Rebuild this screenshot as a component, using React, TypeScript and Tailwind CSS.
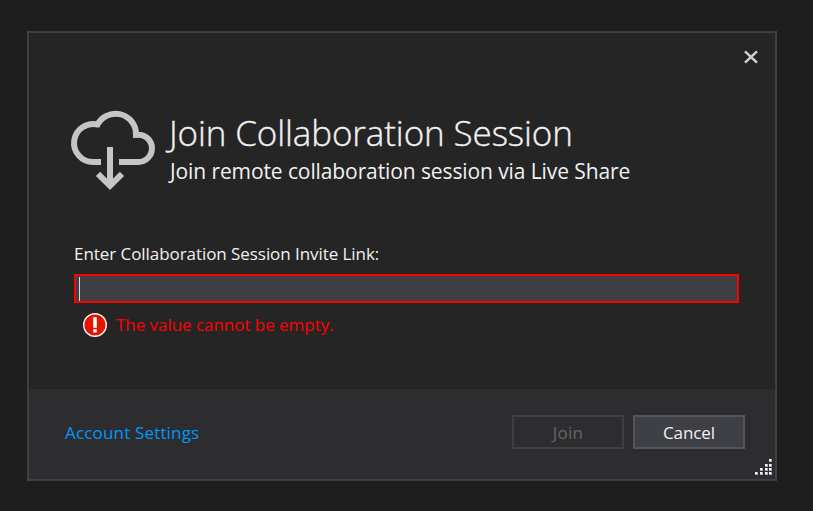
const GRIP: [number, number][] = [
  [14, 0],
  [10, 5], [14, 5],
  [5, 9], [10, 9], [14, 9],
  [0, 13], [5, 13], [10, 13], [14, 13],
];

function CloudDownload() {
  return (
    <svg className="block h-[84px] w-[90px] shrink-0" viewBox="8 8 90 84" fill="none" stroke="#c5c5c5" strokeWidth="6">
      <path d="M41 62H33A19 19 0 1 1 38.5 24.8" />
      <path d="M36.6 26.5A20.45 20.45 0 0 1 76 34.7H78.3A13.65 13.65 0 0 1 78.3 62H59" />
      <path d="M76 33V37.7" />
      <path d="M50 47V84" />
      <path d="M38 73.8L50 85.8L62 73.8" />
    </svg>
  );
}

function ErrorIcon() {
  return (
    <svg className="block size-6 shrink-0" viewBox="0 0 24 24">
      <circle cx="12" cy="12" r="11.3" fill="#e51400" stroke="#f4f4f4" strokeWidth="1.4" />
      <path d="M10.2 4.3h3.6v10.5h-3.6zM10.2 16.2h3.6v3.4h-3.6z" fill="#fff" />
    </svg>
  );
}

export default function App() {
  return (
    <div className="h-[511px] w-[813px] overflow-hidden bg-[#1e1e1e] pt-[31px] pl-[27px] font-['Open_Sans','Noto_Sans',sans-serif] text-[#f1f1f1]">
      <main className="flex h-[450px] w-[750px] flex-col border-2 border-[#3f3f46] bg-[#252526]">
        <div className="flex h-[70px] justify-end pt-[17px] pr-[16px]">
          <button aria-label="Close" className="size-4">
            <svg viewBox="0 0 16 16" className="block size-4" fill="none" stroke="#d0d0d0" strokeWidth="2.5">
              <path d="M2 1.4L14 12.6M14 1.4L2 12.6" />
            </svg>
          </button>
        </div>

        <header className="flex h-[134px] pt-[5px] pl-[39px]">
          <CloudDownload />
          <div className="pt-[2px] pl-[11px] whitespace-nowrap">
            <h1 className="h-[46px] text-[35px] leading-[46px] font-light tracking-[-0.12px] [-webkit-text-stroke:0.35px_#f1f1f1]">Join Collaboration Session</h1>
            <p className="pl-px text-[21px] leading-[30px] tracking-[-0.1px]">Join remote collaboration session via Live Share</p>
          </div>
        </header>

        <section className="flex-1 pl-[45px] whitespace-nowrap">
          <label htmlFor="invite" className="block h-[37px] pt-px text-[17px] leading-[32px] tracking-[-0.06px]">
            Enter Collaboration Session Invite Link:
          </label>
          <div id="invite" className="flex h-[29px] w-[665px] border-2 border-[#ff0000] bg-[#3f3f46] pt-px pl-[3px]">
            <span className="h-6 w-px bg-[#d8d8d8]" />
          </div>
          <div className="flex items-center gap-[9px] pt-[10px] pl-[9px]">
            <ErrorIcon />
            <span className="text-[17px] leading-6 tracking-[-0.04px] text-[#ff0000]">The value cannot be empty.</span>
          </div>
        </section>

        <footer className="flex h-[90px] bg-[#2d2d30] pt-[26px] pl-[36px] whitespace-nowrap">
          <a className="w-[447px] pt-px text-[17px] leading-[34px] tracking-[0.17px] text-[#0097fb]">Account Settings</a>
          <div className="flex h-[34px] gap-[9px] text-[17px]">
            <button disabled className="w-[112px] border-2 border-[#3f3f46] pt-px leading-[30px] tracking-[0.3px] text-[#656565]">Join</button>
            <button className="w-[112px] border-2 border-[#555555] bg-[#3f3f46] pt-px leading-[30px] tracking-[-0.1px]">Cancel</button>
          </div>
          <svg className="mt-[44px] ml-[10px] block h-[17px] w-[17px] shrink-0" viewBox="0 0 17 17" shapeRendering="crispEdges">
            {GRIP.map(([x, y]) => (
              <g key={`${x}-${y}`}>
                <rect x={x} y={y} width="3" height="3" fill="#a6abb9" />
                <rect x={x} y={y} width="2" height="2" fill="#f4f6fa" />
              </g>
            ))}
          </svg>
        </footer>
      </main>
    </div>
  );
}
